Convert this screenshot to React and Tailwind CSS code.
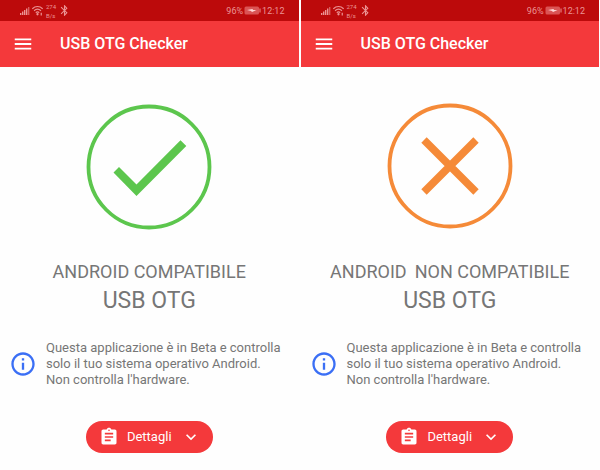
import { MdMenu, MdBluetooth, MdAssignment, MdInfoOutline, MdKeyboardArrowDown } from 'react-icons/md';

// Shared status bar: signal, wifi, network speed, bluetooth, battery, clock
function StatusBar() {
  return (
    <div className="flex h-[21px] items-center justify-between bg-[#bc0a0b] pl-5 pr-[14px] text-[#eb9495]">
      <div className="flex items-center">
        <svg className="h-[10px] w-[10px]" viewBox="0 0 10 10" fill="currentColor">
          <rect x="0" y="7" width="1.4" height="2" />
          <rect x="2" y="5.5" width="1.4" height="3.5" />
          <rect x="4" y="4" width="1.4" height="5" />
          <rect x="6" y="2.5" width="1.4" height="6.5" />
          <rect x="8" y="1" width="1.4" height="8" opacity="0.6" />
        </svg>
        <svg className="ml-[2px] h-[11px] w-[11px]" viewBox="0 0 10 10" fill="none" stroke="currentColor" strokeWidth="1.1">
          <path d="M0.3 3.4C3 0.7 7 0.7 9.7 3.4" />
          <path d="M1.9 5.2C3.7 3.5 6.3 3.5 8.1 5.2" />
          <path d="M3.4 6.9C4.4 6 5.6 6 6.6 6.9" />
          <circle cx="5" cy="8.4" r="0.5" />
          <path d="M8.4 7V9.6" />
        </svg>
        <div className="ml-[3px] w-[11px] text-[6px] leading-[9px]">
          <p>274</p>
          <p>B/s</p>
        </div>
        <MdBluetooth className="ml-px h-[13px] w-[13px]" />
      </div>
      <div className="flex items-center text-[9px] leading-3">
        <span>96%</span>
        <svg className="ml-px mr-px h-[9px] w-[17px]" viewBox="0 0 17 9">
          <rect x="0.5" y="0.5" width="14.5" height="8" rx="1.5" fill="#da5455" />
          <rect x="15.5" y="2.5" width="1" height="4" fill="currentColor" />
          <path d="M3 4L8.5 3L9 4H12.5L8 6L7 5Z" fill="#ffd9d9" />
        </svg>
        <span>12:12</span>
      </div>
    </div>
  );
}

function CompatibleIcon() {
  return (
    <svg className="h-32 w-32" viewBox="0 0 128 128" fill="none" role="img" aria-label="Compatibile">
      <circle cx="64" cy="64" r="60.5" stroke="#5cc64d" strokeWidth="3.8" />
      <path d="M28.5 69.5L34 64L51.5 81.5L95.5 37.3L101.3 43L51.5 93Z" fill="#5cc64d" />
    </svg>
  );
}

function IncompatibleIcon() {
  return (
    <svg className="h-32 w-32" viewBox="0 0 128 128" fill="none" stroke="#f58a38" role="img" aria-label="Non compatibile">
      <circle cx="64" cy="63" r="60.5" strokeWidth="3.8" />
      <path d="M38 37L90 89M90 37L38 89" strokeWidth="7.6" />
    </svg>
  );
}

function Screen({ icon, children }) {
  return (
    <section className="min-w-0 flex-1">
      <StatusBar />
      <header className="flex h-[46px] items-center bg-[#f4393b] pl-3 text-white">
        <button type="button" aria-label="Menu">
          <MdMenu className="h-[22px] w-[22px]" />
        </button>
        <h1 className="ml-[26px] text-[16px] font-medium leading-5">USB OTG Checker</h1>
      </header>

      <main className="flex flex-col items-center pt-9 text-[#767676]">
        {icon}
        <h2 className="mt-[30px] flex gap-2 whitespace-nowrap text-[18px] leading-[22px]">{children}</h2>
        <p className="mt-1 text-[23px] leading-7">USB OTG</p>

        <div className="mt-[25px] flex w-full items-center pl-[9px]">
          <MdInfoOutline className="h-7 w-7 shrink-0 text-[#3b6ff5]" />
          <p className="ml-[9px] whitespace-nowrap text-[13px] leading-4">
            Questa applicazione è in Beta e controlla
            <br />
            solo il tuo sistema operativo Android.
            <br />
            Non controlla l'hardware.
          </p>
        </div>

        <button type="button" className="mt-[33px] flex h-8 items-center rounded-full bg-[#f4393b] pl-[13px] pr-3 text-white">
          <MdAssignment className="h-5 w-5" />
          <span className="ml-2 text-[13px] leading-5">Dettagli</span>
          <MdKeyboardArrowDown className="ml-[9px] h-5 w-5" stroke="currentColor" />
        </button>
      </main>
    </section>
  );
}

export default function App() {
  return (
    <div className="flex min-h-screen gap-[2px] bg-[#fefefe] pr-px font-[Roboto,sans-serif]">
      <Screen icon={<CompatibleIcon />}>ANDROID COMPATIBILE</Screen>
      <Screen icon={<IncompatibleIcon />}>
        <span>ANDROID</span>
        <span>NON COMPATIBILE</span>
      </Screen>
    </div>
  );
}
